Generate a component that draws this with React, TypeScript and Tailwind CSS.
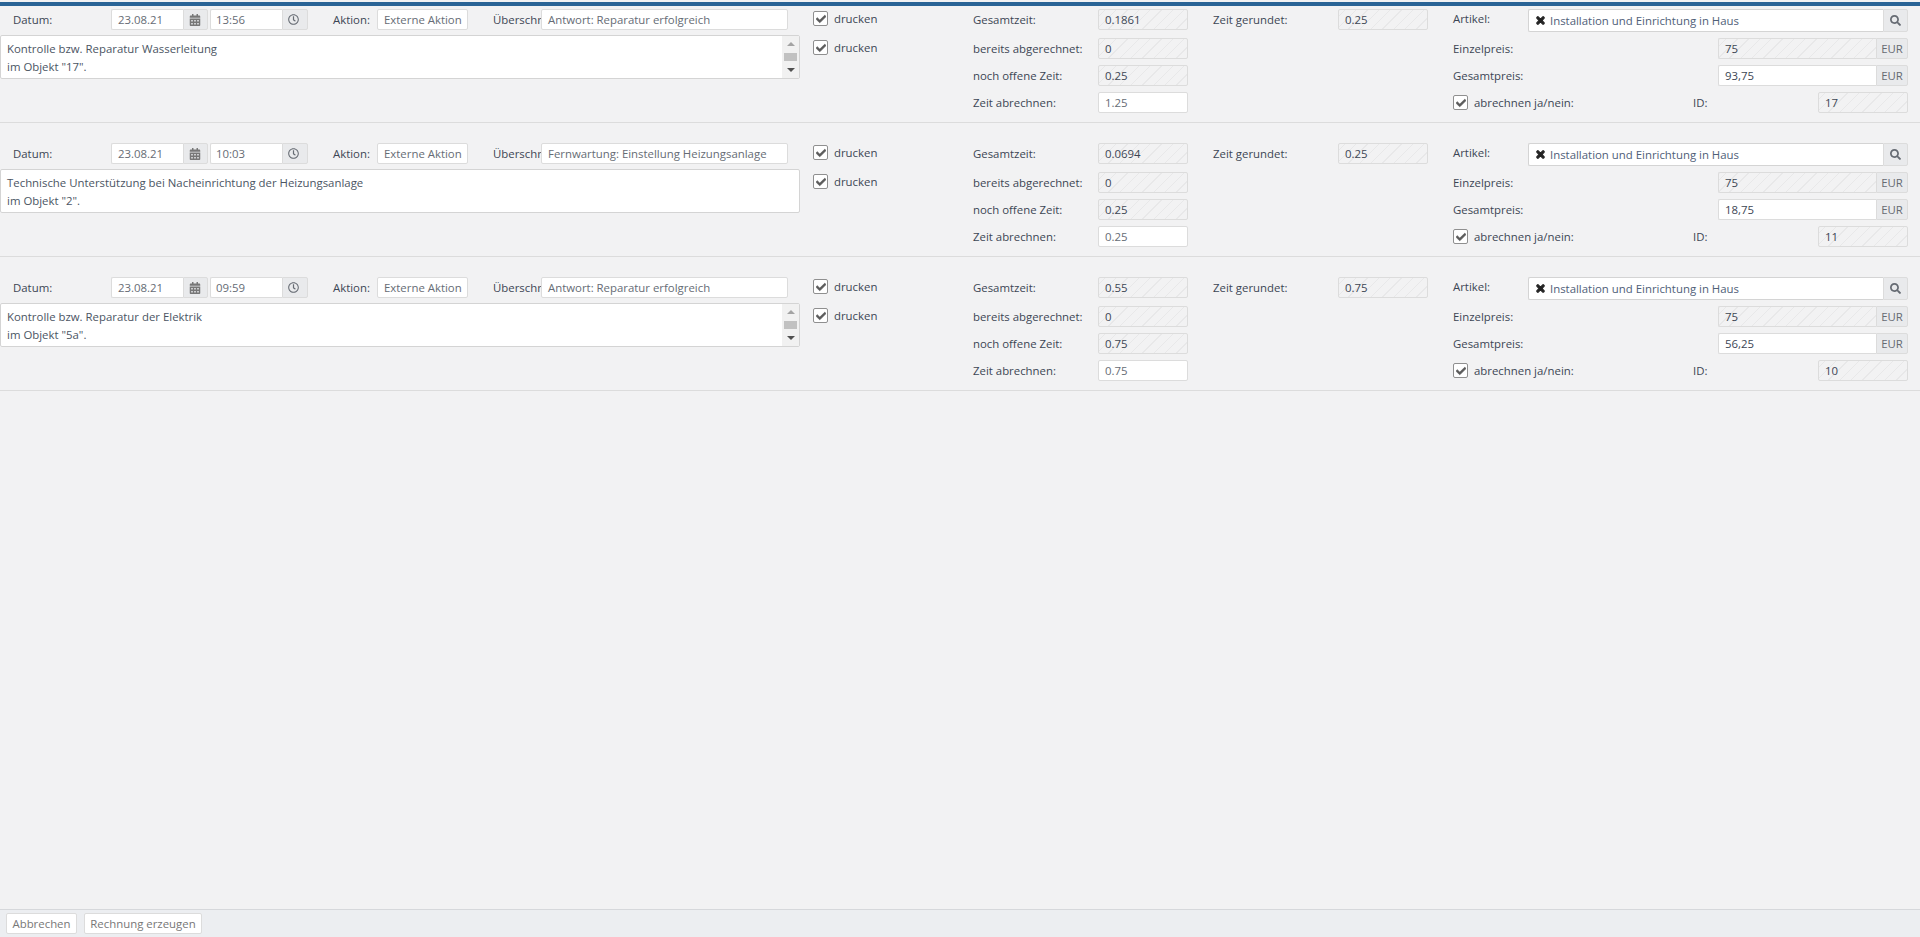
import { FaCalendarAlt, FaRegClock, FaSearch, FaTimes, FaCheck } from "react-icons/fa";

const hatch =
  "bg-[repeating-linear-gradient(-45deg,#f2f2f3_0px,#f2f2f3_7px,#e8e8e9_7px,#e8e8e9_8px)]";
const field = "flex h-[21px] items-center rounded-[2px] border border-[#dcdcdc] px-[6px]";

function Label({ children, className = "" }: { children: React.ReactNode; className?: string }) {
  return <span className={`whitespace-nowrap text-[#3c4654] ${className}`}>{children}</span>;
}

function Check({ label }: { label: string }) {
  return (
    <div className="flex h-[15px] items-center gap-[6px]">
      <span className="flex h-[15px] w-[15px] items-center justify-center rounded-[2px] border border-[#8f8f8f] bg-white">
        <FaCheck className="text-[10px] text-[#5a5a5a]" stroke="currentColor" strokeWidth={30} />
      </span>
      <span className="whitespace-nowrap pt-[1px] text-[#3c4654]">{label}</span>
    </div>
  );
}

function ReadOnly({ value, className = "w-[90px]" }: { value: string; className?: string }) {
  return <div className={`${field} ${hatch} text-[#3c4654] ${className}`}>{value}</div>;
}

function Input({ value, className = "" }: { value: string; className?: string }) {
  return <div className={`${field} bg-white text-[#666c75] ${className}`}>{value}</div>;
}

function Addon({ children, className = "" }: { children: React.ReactNode; className?: string }) {
  return (
    <div
      className={`flex h-[21px] items-center justify-center rounded-r-[2px] border border-[#dcdcdc] bg-[#e9eaec] text-[#666b73] ${className}`}
    >
      {children}
    </div>
  );
}

function Row({
  entry,
  first,
}: {
  entry: {
    time: string;
    title: string;
    lines: string[];
    scroll?: boolean;
    total: string;
    rounded: string;
    done: string;
    open: string;
    bill: string;
    price: string;
    sum: string;
    id: string;
  };
  first?: boolean;
}) {
  return (
    <div
      className={`flex border-b border-[#dcdcdc] ${first ? "h-[117px] pt-[3px]" : "h-[134px] pt-[20px]"}`}
    >
      <div className="w-[800px] shrink-0">
        <div className="flex h-[21px] items-center">
          <Label className="ml-[13px] w-[98px]">Datum:</Label>
          <Input value="23.08.21" className="w-[72px] rounded-r-none border-r-0" />
          <Addon className="w-[25px] pr-[2px]">
            <FaCalendarAlt className="text-[12px] text-[#777]" />
          </Addon>
          <Input value={entry.time} className="ml-[2px] w-[72px] rounded-r-none border-r-0 !pl-[5px]" />
          <Addon className="w-[26px] pr-[3px]">
            <FaRegClock className="text-[11px]" />
          </Addon>
          <Label className="ml-[25px] w-[44px]">Aktion:</Label>
          <Input value="Externe Aktion" className="w-[91px] whitespace-nowrap" />
          <Label className="ml-[25px] w-[48px]">Überschr</Label>
          <Input value={entry.title} className="w-[247px] whitespace-nowrap" />
        </div>
        <div className="mt-[5px] flex h-[44px] rounded-[2px] border border-[#d4d4d4] bg-white">
          <div className="flex-1 px-[6px] pt-[4px] leading-[18px] text-[#4b5563]">
            {entry.lines.map((l) => (
              <div key={l}>{l}</div>
            ))}
          </div>
          {entry.scroll && (
            <div className="flex w-[17px] flex-col items-center justify-between bg-[#f1f1f1] py-[6px]">
              <span className="h-0 w-0 border-x-[4px] border-b-[4px] border-x-transparent border-b-[#a3a3a3]" />
              <span className="h-[8px] w-[13px] bg-[#c1c1c1]" />
              <span className="h-0 w-0 border-x-[4px] border-t-[4px] border-x-transparent border-t-[#505050]" />
            </div>
          )}
        </div>
      </div>

      <div className="ml-[13px] flex w-[160px] shrink-0 flex-col gap-[14px] pt-[2px]">
        <Check label="drucken" />
        <Check label="drucken" />
      </div>

      <div className="w-[215px] shrink-0">
        <div className="flex items-center">
          <Label className="w-[125px]">Gesamtzeit:</Label>
          <ReadOnly value={entry.total} />
        </div>
        <div className="mt-[8px] flex items-center">
          <Label className="w-[125px]">bereits abgerechnet:</Label>
          <ReadOnly value={entry.done} />
        </div>
        <div className="mt-[6px] flex items-center">
          <Label className="w-[125px]">noch offene Zeit:</Label>
          <ReadOnly value={entry.open} />
        </div>
        <div className="mt-[6px] flex items-center">
          <Label className="w-[125px]">Zeit abrechnen:</Label>
          <Input value={entry.bill} className="w-[90px]" />
        </div>
      </div>

      <div className="ml-[25px] w-[215px] shrink-0">
        <div className="flex items-center">
          <Label className="w-[125px]">Zeit gerundet:</Label>
          <ReadOnly value={entry.rounded} />
        </div>
      </div>

      <div className="ml-[25px] w-[455px] shrink-0">
        <div className="flex h-[23px]">
          <Label className="w-[75px] pt-[1px]">Artikel:</Label>
          <div className="flex h-[23px] flex-1 items-center gap-[4px] rounded-l-[2px] border border-r-0 border-[#d4d4d4] bg-white px-[6px] text-[#4f6078]">
            <FaTimes className="text-[11px] text-[#222]" stroke="currentColor" strokeWidth={50} />
            <span className="whitespace-nowrap">Installation und Einrichtung in Haus</span>
          </div>
          <Addon className="h-[23px] w-[25px]">
            <FaSearch className="text-[11px]" />
          </Addon>
        </div>
        <div className="mt-[6px] flex items-center">
          <Label className="w-[265px]">Einzelpreis:</Label>
          <ReadOnly value={entry.price} className="w-[158px] rounded-r-none border-r-0" />
          <Addon className="w-[32px]">EUR</Addon>
        </div>
        <div className="mt-[6px] flex items-center">
          <Label className="w-[265px]">Gesamtpreis:</Label>
          <Input value={entry.sum} className="w-[158px] rounded-r-none border-r-0 !text-[#3c4654]" />
          <Addon className="w-[32px]">EUR</Addon>
        </div>
        <div className="mt-[6px] flex h-[21px] items-center">
          <div className="w-[240px]">
            <Check label="abrechnen ja/nein:" />
          </div>
          <Label className="w-[125px]">ID:</Label>
          <ReadOnly value={entry.id} />
        </div>
      </div>
    </div>
  );
}

const entries = [
  {
    time: "13:56",
    title: "Antwort: Reparatur erfolgreich",
    lines: ["Kontrolle bzw. Reparatur Wasserleitung", 'im Objekt "17".'],
    scroll: true,
    total: "0.1861",
    rounded: "0.25",
    done: "0",
    open: "0.25",
    bill: "1.25",
    price: "75",
    sum: "93,75",
    id: "17",
  },
  {
    time: "10:03",
    title: "Fernwartung: Einstellung Heizungsanlage",
    lines: ["Technische Unterstützung bei Nacheinrichtung der Heizungsanlage", 'im Objekt "2".'],
    total: "0.0694",
    rounded: "0.25",
    done: "0",
    open: "0.25",
    bill: "0.25",
    price: "75",
    sum: "18,75",
    id: "11",
  },
  {
    time: "09:59",
    title: "Antwort: Reparatur erfolgreich",
    lines: ["Kontrolle bzw. Reparatur der Elektrik", 'im Objekt "5a".'],
    scroll: true,
    total: "0.55",
    rounded: "0.75",
    done: "0",
    open: "0.75",
    bill: "0.75",
    price: "75",
    sum: "56,25",
    id: "10",
  },
];

export default function App() {
  return (
    <main className="flex h-[937px] flex-col overflow-hidden bg-[#f2f2f3] pt-[2px] font-['Open_Sans',sans-serif] text-[11.4px]">
      <div className="h-[4px] shrink-0 bg-[#2a6496]" />
      <div className="flex-1">
        {entries.map((e, i) => (
          <Row key={e.id} entry={e} first={i === 0} />
        ))}
      </div>
      <footer className="flex h-[28px] shrink-0 items-center gap-[7px] border-t border-[#d6d8db] bg-[#eceef1] px-[6px]">
        <button className="h-[21px] w-[71px] rounded-[2px] border border-[#dcdcdc] bg-white text-[#777]">
          Abbrechen
        </button>
        <button className="h-[21px] w-[118px] rounded-[2px] border border-[#dcdcdc] bg-white text-[#777]">
          Rechnung erzeugen
        </button>
      </footer>
    </main>
  );
}
